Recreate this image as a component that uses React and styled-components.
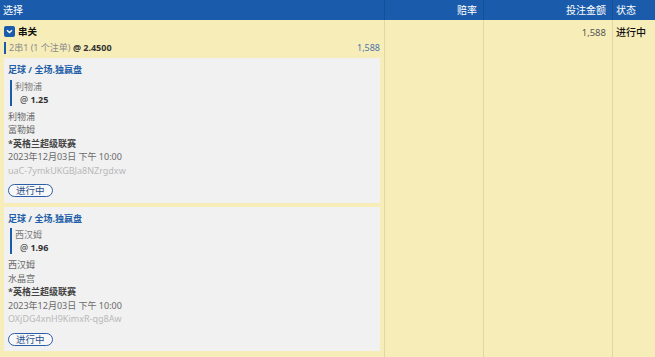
import React from 'react'
import styled, { createGlobalStyle } from 'styled-components'

const GlobalStyle = createGlobalStyle`
  html, body {
    margin: 0;
    padding: 0;
    background: #f7edb9;
  }
  body {
    font-family: "Noto Sans", "Noto Sans CJK SC", sans-serif;
    font-size: 9px;
  }
`

const Table = styled.div`
  display: grid;
  grid-template-columns: 385px 99px 129px 1fr;
  grid-template-rows: 20px 337px;
  width: 655px;
  height: 357px;
  overflow: hidden;
`

const HeadCell = styled.div`
  background: #1a5cab;
  color: #fff;
  font-size: 10px;
  line-height: 20px;
  padding: 0 ${p => (p.$right ? '6px' : '3px')};
  text-align: ${p => (p.$right ? 'right' : 'left')};
  border-right: ${p => (p.$last ? 'none' : '1px solid #154f96')};
  box-sizing: border-box;
`

const Cell = styled.div`
  background: #f7edb9;
  border-right: ${p => (p.$last ? 'none' : '1px solid #e2d7a0')};
  box-sizing: border-box;
  padding: ${p => (p.$pad ? p.$pad : '0')};
  text-align: ${p => (p.$right ? 'right' : 'left')};
  line-height: 13px;
`

const Amount = styled.span`
  color: #555;
  font-size: 9.5px;
`

const Status = styled.span`
  color: #111;
  font-size: 10px;
  font-weight: 500;
`

const Selection = styled.div`
  padding: 5px 4px 0 4px;
`

const GroupHead = styled.div`
  display: flex;
  align-items: center;
  gap: 3px;
  height: 12px;
  font-weight: 700;
  font-size: 9.5px;
  color: #111;
`

const Toggle = styled.span`
  width: 11px;
  height: 11px;
  border-radius: 2px;
  background: #1a5cab;
  display: inline-flex;
  align-items: center;
  justify-content: center;
`

const ParlayLine = styled.div`
  display: flex;
  justify-content: space-between;
  margin-top: 5px;
  border-left: 2px solid #1a5cab;
  padding-left: 3px;
  line-height: 12px;
  color: #8a8a8a;
  b {
    color: #333;
  }
`

const Stake = styled.span`
  color: #4f74aa;
`

const Cards = styled.div`
  display: flex;
  flex-direction: column;
  gap: 4px;
  margin-top: 4px;
`

const Card = styled.div`
  background: #f1f1f1;
  padding: 5px 4px 5px 4px;
  line-height: 13.5px;
  color: #6a6a6a;
`

const Market = styled.div`
  font-weight: 700;
  color: #1f5ea8;
`

const Pick = styled.div`
  margin: 3px 0 4px 2px;
  border-left: 2px solid #1a5cab;
  padding-left: 3px;
  line-height: 13px;
  color: #7a7a7a;
`

const Odds = styled.div`
  padding-left: 5px;
  color: #333;
  b {
    color: #333;
  }
`

const League = styled.div`
  color: #444;
  font-weight: 600;
`

const Muted = styled.div`
  color: #b8b8b8;
`

const Pill = styled.span`
  display: inline-block;
  margin-top: 7px;
  border: 1px solid #2a5ea8;
  border-radius: 8px;
  padding: 0 7px;
  line-height: 11px;
  height: 11px;
  font-size: 9.5px;
  color: #2a4f8a;
  background: #f8f8f8;
`

const legs = [
  {
    pick: '利物浦',
    odds: '1.25',
    home: '利物浦',
    away: '富勒姆',
    id: 'uaC-7ymkUKGBJa8NZrgdxw',
  },
  {
    pick: '西汉姆',
    odds: '1.96',
    home: '西汉姆',
    away: '水晶宫',
    id: 'OXjDG4xnH9KimxR-qg8Aw',
  },
]

const Chevron = () => (
  <svg width="7" height="5" viewBox="0 0 7 5">
    <path d="M1 1.2 L3.5 3.6 L6 1.2" fill="none" stroke="#fff" strokeWidth="1.4" />
  </svg>
)

export default function App() {
  return (
    <>
      <GlobalStyle />
      <Table>
        <HeadCell>选择</HeadCell>
        <HeadCell $right>赔率</HeadCell>
        <HeadCell $right>投注金额</HeadCell>
        <HeadCell $last>状态</HeadCell>

        <Cell>
          <Selection>
            <GroupHead>
              <Toggle><Chevron /></Toggle>
              串关
            </GroupHead>
            <ParlayLine>
              <span>2串1 (1 个注单) <b>@ 2.4500</b></span>
              <Stake>1,588</Stake>
            </ParlayLine>
            <Cards>
              {legs.map((leg, i) => (
                <Card key={i}>
                  <Market>足球 / 全场.独赢盘</Market>
                  <Pick>
                    {leg.pick}
                    <Odds>@ <b>{leg.odds}</b></Odds>
                  </Pick>
                  <div>{leg.home}</div>
                  <div>{leg.away}</div>
                  <League>*英格兰超级联赛</League>
                  <div>2023年12月03日 下午 10:00</div>
                  <Muted>{leg.id}</Muted>
                  <Pill>进行中</Pill>
                </Card>
              ))}
            </Cards>
          </Selection>
        </Cell>
        <Cell />
        <Cell $right $pad="6px 6px 0 0">
          <Amount>1,588</Amount>
        </Cell>
        <Cell $last $pad="6px 0 0 3px">
          <Status>进行中</Status>
        </Cell>
      </Table>
    </>
  )
}
